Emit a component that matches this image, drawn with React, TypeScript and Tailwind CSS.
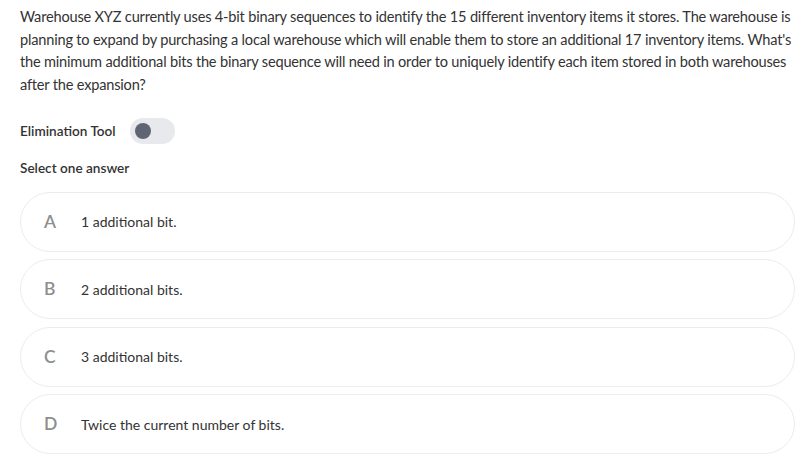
import React from "react";

const options = [
  { letter: "A", text: "1 additional bit." },
  { letter: "B", text: "2 additional bits." },
  { letter: "C", text: "3 additional bits." },
  { letter: "D", text: "Twice the current number of bits." },
];

export default function App() {
  return (
    <div
      className="w-[800px] h-[466px] bg-white overflow-hidden pl-5 pr-[5px] pt-[6px]"
      style={{ fontFamily: "Lato, 'Open Sans', sans-serif" }}
    >
      <p className="text-[14.6px] leading-[22.7px] tracking-[-0.2px] text-[#333333] pr-[3px]">
        Warehouse XYZ currently uses 4-bit binary sequences to identify the 15 different inventory items it stores. The warehouse is planning to expand by purchasing a local warehouse which will enable them to store an additional 17 inventory items. What's the minimum additional bits the binary sequence will need in order to uniquely identify each item stored in both warehouses after the expansion?
      </p>
      <div className="flex items-center mt-[21px] h-[26px]">
        <span className="text-[13.6px] font-semibold text-[#333333] w-[110px]">Elimination Tool</span>
        <div className="w-[45px] h-[26px] rounded-full bg-[#e8e9ec] flex items-center pl-[5px]">
          <div className="w-[16px] h-[16px] rounded-full bg-[#5f6573]" />
        </div>
      </div>
      <div className="mt-[13px] text-[13.6px] font-semibold text-[#333333] leading-[22px]">Select one answer</div>
      <div className="mt-[13px] flex flex-col gap-[7.5px]">
        {options.map((o) => (
          <div
            key={o.letter}
            className="h-[60px] rounded-full border border-[#ececec] flex items-center"
          >
            <span className="w-[60px] pl-[23px] text-[17.5px] font-semibold text-[#8e8e8e]">{o.letter}</span>
            <span className="text-[14px] text-[#333333]">{o.text}</span>
          </div>
        ))}
      </div>
    </div>
  );
}
